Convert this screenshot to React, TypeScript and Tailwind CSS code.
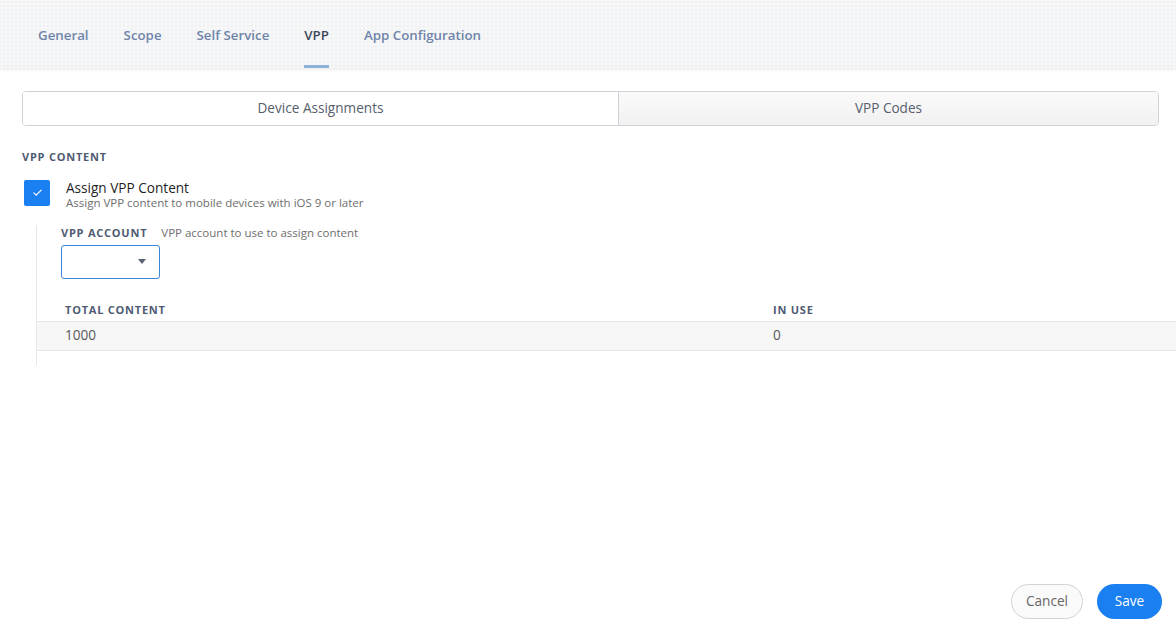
import React, { useState } from 'react';

const tabs = ['General', 'Scope', 'Self Service', 'VPP', 'App Configuration'];

function CheckIcon() {
  return (
    <svg viewBox="0 0 12 12" className="h-[11px] w-[11px]" fill="none">
      <path d="M2 6.4l2.6 2.5L10 3.4" stroke="white" strokeWidth="1.3" strokeLinecap="round" strokeLinejoin="round" />
    </svg>
  );
}

export default function App() {
  const [segment, setSegment] = useState<'devices' | 'codes'>('devices');
  const [assign, setAssign] = useState(true);

  return (
    <div className="flex h-[635px] w-[1176px] flex-col bg-white font-['Open_Sans',sans-serif] text-[13px]">
      {/* Tab header */}
      <div className="pt-[2px]">
        <div className="flex h-[66px] items-stretch gap-[35px] bg-[#f2f3f4] bg-[radial-gradient(circle,#fbfbfb_1.1px,transparent_1.4px)] bg-[size:4px_4px] px-[38px] shadow-[0_-1px_2px_rgba(0,0,0,0.08),0_2px_3px_rgba(0,0,0,0.07)]">
          {tabs.map((t) => (
            <div
              key={t}
              className={`flex items-center border-b-[3px] pt-[5px] text-[13.3px] font-semibold ${
                t === 'VPP' ? 'border-[#90b2da] text-[#3b4658]' : 'border-transparent text-[#6f84aa]'
              }`}
            >
              {t}
            </div>
          ))}
        </div>
      </div>

      <div className="flex flex-1 flex-col pl-[22px] pt-[23px]">
        {/* Segmented control */}
        <div className="mr-[17px] flex h-[35px] overflow-hidden rounded-[4px] border border-[#cfd3d9]">
          <button
            onClick={() => setSegment('devices')}
            className={`flex-[596] text-[13.6px] text-[#565e6c] ${segment === 'devices' ? 'bg-white' : 'bg-[#f5f5f5]'}`}
          >
            Device Assignments
          </button>
          <div className="w-px bg-[#cfd3d9]" />
          <button
            onClick={() => setSegment('codes')}
            className={`flex-[540] text-[13.6px] text-[#565e6c] ${segment === 'codes' ? 'bg-white' : 'bg-gradient-to-b from-[#fafafa] to-[#f1f1f1]'}`}
          >
            VPP Codes
          </button>
        </div>

        <div className="mt-[23px] text-[11px] font-bold tracking-[0.07em] text-[#4f5b73]">VPP CONTENT</div>

        <div className="mt-[14px] flex items-start gap-[16px] pl-[2px]">
          <button
            onClick={() => setAssign(!assign)}
            className={`flex h-[26px] w-[26px] items-center justify-center rounded-[2px] ${assign ? 'bg-[#1a7ff0]' : 'border border-[#cfd3d9] bg-white'}`}
          >
            {assign && <CheckIcon />}
          </button>
          <div className="leading-[15px]">
            <div className="text-[13.6px] text-[#1f1f1f]">Assign VPP Content</div>
            <div className="text-[11.5px] text-[#6e6e6e]">Assign VPP content to mobile devices with iOS 9 or later</div>
          </div>
        </div>

        {/* Nested settings */}
        <div className="ml-[14px] mt-[15px] border-l border-[#e4e7ec] pb-[14px]">
          <div className="flex items-baseline gap-[14px] pl-[24px] leading-[15px]">
            <span className="text-[11px] font-bold tracking-[0.07em] text-[#4f5b73]">VPP ACCOUNT</span>
            <span className="text-[11.5px] text-[#6e6e6e]">VPP account to use to assign content</span>
          </div>
          <div className="ml-[24px] mt-[5px] flex h-[34px] w-[99px] items-center justify-end rounded-[3px] border border-[#3b86da] pr-[13px]">
            <svg viewBox="0 0 8 5" className="h-[5px] w-[8px]">
              <path d="M0 0h8L4 5z" fill="#5b6474" />
            </svg>
          </div>

          <div className="mt-[19px]">
            <div className="flex h-[24px] items-center border-b border-[#e4e7ec] pt-[2px] text-[11px] font-bold tracking-[0.07em] text-[#4f5b73]">
              <div className="w-[736px] pl-[28px]">TOTAL CONTENT</div>
              <div>IN USE</div>
            </div>
            <div className="flex h-[29px] items-center border-b border-[#e4e7ec] bg-[#f7f7f8] text-[13.6px] text-[#585858]">
              <div className="w-[736px] pl-[28px]">1000</div>
              <div>0</div>
            </div>
          </div>
        </div>

        {/* Footer */}
        <div className="mt-auto flex justify-end gap-[14px] pb-[16px] pr-[14px]">
          <button className="h-[35px] w-[72px] rounded-full border border-[#d0d3d8] bg-[#fafafa] text-[13.6px] text-[#666]">
            Cancel
          </button>
          <button className="h-[35px] w-[65px] rounded-full bg-[#1a7ff0] text-[13.6px] text-white">Save</button>
        </div>
      </div>
    </div>
  );
}
